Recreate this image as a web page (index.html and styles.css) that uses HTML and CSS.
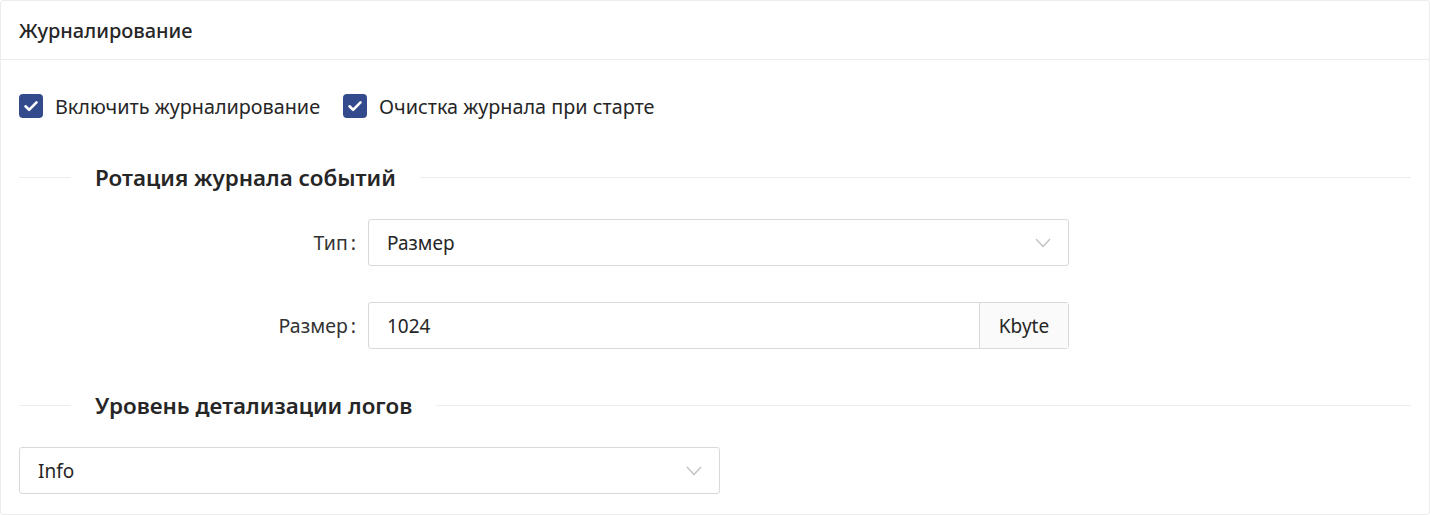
FILE: index.html
```html
<!DOCTYPE html>
<html lang="ru">
<head>
  <meta charset="UTF-8" />
  <meta name="viewport" content="width=device-width, initial-scale=1.0" />
  <title>Журналирование</title>
  <link rel="stylesheet" href="styles.css">
</head>
<body>

  <!-- Logging card -->
  <div class="card">
    <div class="card-head">Журналирование</div>

    <div class="card-body">
      <div class="checks">
        <label class="check">
          <span class="check-box">
            <svg viewBox="0 0 24 24" width="24" height="24"><path d="M6.5 12.3l3.6 3.5 7.4-7.4" fill="none" stroke="#fff" stroke-width="2.6" stroke-linecap="round" stroke-linejoin="round"/></svg>
          </span>
          <span>Включить журналирование</span>
        </label>
        <label class="check">
          <span class="check-box">
            <svg viewBox="0 0 24 24" width="24" height="24"><path d="M6.5 12.3l3.6 3.5 7.4-7.4" fill="none" stroke="#fff" stroke-width="2.6" stroke-linecap="round" stroke-linejoin="round"/></svg>
          </span>
          <span>Очистка журнала при старте</span>
        </label>
      </div>

      <div class="divider"><span>Ротация журнала событий</span></div>

      <div class="form-row">
        <div class="form-label">Тип<span class="colon">:</span></div>
        <div class="select">
          <span>Размер</span>
          <svg class="arrow" viewBox="0 0 16 10" width="16" height="10"><polyline points="1,1 8,8.5 15,1" fill="none" stroke="#bfbfbf" stroke-width="1.2"/></svg>
        </div>
      </div>

      <div class="form-row">
        <div class="form-label">Размер<span class="colon">:</span></div>
        <div class="input-group">
          <input class="input" type="text" value="1024">
          <span class="addon">Kbyte</span>
        </div>
      </div>

      <div class="divider"><span>Уровень детализации логов</span></div>

      <div class="select">
        <span>Info</span>
        <svg class="arrow" viewBox="0 0 16 10" width="16" height="10"><polyline points="1,1 8,8.5 15,1" fill="none" stroke="#bfbfbf" stroke-width="1.2"/></svg>
      </div>
    </div>
  </div>

</body>
</html>
```

FILE: styles.css
```css
body {
  font-family: 'Noto Sans', 'Open Sans', sans-serif;
  background-color: #fff;
  color: #262626;
  margin: 0;
  padding: 0;
}

/* Card */
.card {
  border: 1px solid #ececec;
  border-radius: 3px;
  box-sizing: border-box;
  height: 515px;
}
.card-head {
  height: 58px;
  display: flex;
  align-items: center;
  padding: 0 18px;
  font-size: 20px;
  font-weight: 500;
  border-bottom: 1px solid #ececec;
}
.card-body {
  padding: 31px 18px 0;
}

/* Checkboxes */
.checks {
  display: flex;
  gap: 23px;
  height: 30px;
  align-items: center;
}
.check {
  display: flex;
  align-items: center;
  gap: 12px;
  font-size: 19.8px;
  cursor: pointer;
}
.check-box {
  width: 24px;
  height: 24px;
  border-radius: 4px;
  background-color: #334a8c;
  display: flex;
}

/* Divider with text */
.divider {
  display: flex;
  align-items: center;
  height: 30px;
  margin: 41px 0 27px;
  font-size: 22.4px;
  font-weight: 600;
}
.divider::before,
.divider::after {
  content: "";
  border-top: 1px solid #ececec;
}
.divider::before {
  width: 52px;
}
.divider::after {
  flex: 1;
}
.divider span {
  padding: 0 24px;
}

/* Form rows */
.form-row {
  display: flex;
  align-items: center;
  margin-bottom: 36px;
}
.form-label {
  width: 349px;
  box-sizing: border-box;
  padding-right: 12px;
  text-align: right;
  font-size: 19.5px;
  color: #333;
}
.colon {
  margin-left: 3px;
}
.select,
.input-group {
  width: 701px;
  height: 47px;
  box-sizing: border-box;
  border: 1px solid #d9d9d9;
  border-radius: 3px;
  display: flex;
  align-items: center;
  font-size: 19px;
}
.select {
  justify-content: space-between;
  padding: 0 17px 0 18px;
}
.arrow {
  margin-top: 1px;
}
.input {
  flex: 1;
  height: 100%;
  border: none;
  outline: none;
  padding: 0 18px;
  font-family: inherit;
  font-size: 19px;
  color: #262626;
  background: transparent;
}
.addon {
  width: 88px;
  height: 100%;
  display: flex;
  align-items: center;
  justify-content: center;
  background-color: #fafafa;
  border-left: 1px solid #d9d9d9;
}
```
